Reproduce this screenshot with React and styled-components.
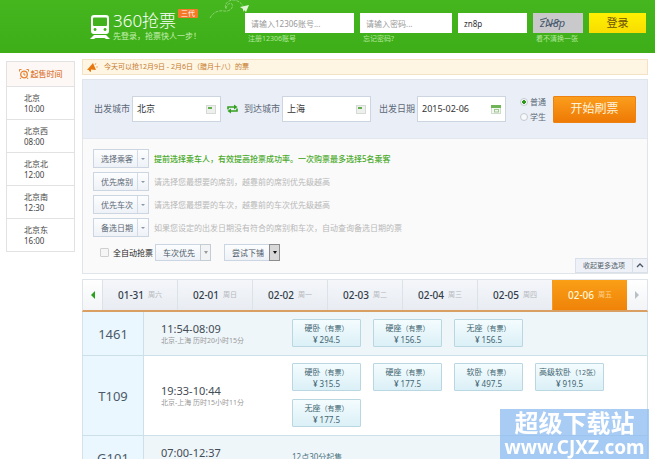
import React, { useState } from "react";
import styled, { createGlobalStyle, css } from "styled-components";

const GlobalStyle = createGlobalStyle`
    * {
        box-sizing: border-box;
    }

    body {
        margin: 0;
        background-color: #fff;
        color: #444;
        font-family: "Noto Sans", "Noto Sans CJK SC", sans-serif;
        font-size: 8px;
        line-height: 12px;
    }

    button,
    input,
    select {
        margin: 0;
        font-family: inherit;
        font-size: inherit;
        line-height: inherit;
        color: inherit;
    }

    button {
        padding: 0;
        cursor: pointer;
    }
`;

const Header = styled.header`
    display: flex;
    min-height: 53px;
    padding: 0 9px 0 90px;
    background: linear-gradient(#46b61f, #3dae18);
`;

const Brand = styled.div`
    position: relative;
    display: flex;
    flex: 0 0 155px;
    align-items: flex-start;
    gap: 3px;
    padding-top: 12px;
    color: #fff;
`;

const Train = styled.svg`
    width: 20px;
    height: 24px;
    margin-top: 3px;
`;

const BrandName = styled.h1`
    margin: 0;
    font-size: 17px;
    font-weight: 300;
    line-height: 18px;
`;

const Slogan = styled.p`
    margin: 0;
    color: #c8f0b4;
    white-space: nowrap;
`;

const Badge = styled.span`
    position: absolute;
    top: 9px;
    left: 88px;
    padding: 0 3px;
    background-color: #f47a2a;
    border-radius: 1px;
    font-size: 7px;
    line-height: 9px;
`;

const Plane = styled.svg`
    position: absolute;
    top: 0;
    left: 118px;
    width: 44px;
    height: 20px;
`;

const Login = styled.form`
    display: grid;
    flex: 1;
    grid-template-columns: 109fr 92fr 69fr 50px 57px;
    gap: 6px;
    align-items: start;
    padding-top: 13px;
`;

const LoginInput = styled.input`
    display: block;
    width: 100%;
    height: 20px;
    padding: 0 6px;
    border: none;
    background-color: #fff;
    color: #333;

    &::placeholder {
        color: #999;
        opacity: 1;
    }
`;

const LoginLink = styled.a`
    display: block;
    padding-left: 3px;
    color: #b5e89f;
    font-size: 7px;
    text-decoration: none;
    white-space: nowrap;
`;

const Captcha = styled.svg`
    display: block;
    width: 50px;
    height: 20px;
    background-color: #c9c9cb;
`;

const LoginButton = styled.button`
    height: 20px;
    border: none;
    background: linear-gradient(#fff000, #f8dd00);
    color: #6d5300;
    font-size: 11px;
`;

const Body = styled.div`
    display: flex;
    align-items: flex-start;
    gap: 7px;
    padding: 6px 7px 0 6px;
`;

const Sidebar = styled.aside`
    flex: 0 0 69px;
    margin-top: 2px;
    border: 1px solid #e2e2e2;
`;

const SidebarTitle = styled.h2`
    display: flex;
    align-items: center;
    justify-content: center;
    gap: 2px;
    height: 24px;
    margin: 0;
    background-color: #fdf8f5;
    color: #dd7c3c;
    font-size: 8px;
    font-weight: 500;
`;

const StationList = styled.ul`
    margin: 0;
    padding: 0;
    list-style: none;
`;

const Station = styled.li`
    height: 33px;
    padding: 5px 0 0 17px;
    border-top: 1px solid #e2e2e2;
    line-height: 11px;
`;

const Main = styled.main`
    flex: 1;
    min-width: 0;
`;

const Notice = styled.p`
    display: flex;
    align-items: center;
    gap: 6px;
    height: 16px;
    margin: 0 0 4px;
    padding-left: 4px;
    border: 1px solid #f3e2c4;
    background-color: #fff5e3;
    color: #c47b2c;
    font-size: 7px;
`;

const Panel = styled.section`
    border: 1px solid #dfe5ea;
    background-color: #fafafa;
`;

const SearchForm = styled.form`
    display: flex;
    align-items: center;
    height: 59px;
    padding: 0 11px;
    border-bottom: 1px solid #e3e8ee;
    background-color: #eaeff7;
    color: #5c6878;
    font-size: 9px;
    white-space: nowrap;
`;

const Field = styled.label`
    display: flex;
    flex: 1;
    align-items: center;
    gap: 2px;
    min-width: 0;
`;

const FieldBox = styled.span`
    display: flex;
    flex: 1;
    align-items: center;
    min-width: 0;
    height: 26px;
    padding: 0 4px;
    border: 1px solid #cdd5e0;
    background-color: #fff;
`;

const FieldInput = styled.input`
    flex: 1;
    width: 100%;
    min-width: 0;
    padding: 0;
    border: none;
    outline: none;
    background: none;
    color: #333;
`;

const SwapButton = styled.button`
    display: flex;
    flex: 0 0 23px;
    justify-content: center;
    border: none;
    background: none;
`;

const DateGap = styled.span`
    flex: 0 0 8px;
`;

const RadioGroup = styled.div`
    display: flex;
    flex-direction: column;
    gap: 3px;
    margin: 0 7px 0 14px;
    font-size: 8px;
`;

const RadioLabel = styled.label`
    display: flex;
    align-items: center;
    gap: 2px;
`;

const Radio = styled.input`
    width: 8px;
    height: 8px;
    margin: 0;
    appearance: none;
    border: 1px solid #c5cad0;
    border-radius: 50%;
    background-color: #f6f8fa;

    &:checked {
        background: radial-gradient(circle, #2d9a1a 0 2px, #f6f8fa 2px);
    }
`;

const SubmitButton = styled.button`
    flex: 0 0 83px;
    height: 27px;
    border: 1px solid #ee8210;
    border-radius: 1px;
    background: linear-gradient(#fb9d1c, #ee7a05);
    color: #fff3dd;
    font-size: 12px;
`;

const Options = styled.div`
    display: flex;
    flex-direction: column;
    gap: 4px;
    padding: 10px 0 0 10px;
`;

const OptionRow = styled.div`
    display: flex;
    align-items: center;
    gap: 5px;
`;

const OptionButton = styled.button`
    display: flex;
    align-items: stretch;
    width: 56px;
    height: 19px;
    border: 1px solid #cbd6e2;
    background: linear-gradient(#fcfdfe, #eef2f7);
    color: #5a6674;
    line-height: 17px;
`;

const OptionText = styled.span`
    flex: 1;
    padding-left: 3px;
`;

const Caret = styled.span`
    display: flex;
    flex: 0 0 11px;
    align-items: center;
    justify-content: center;
    border-left: 1px solid #d3dce6;

    &::after {
        content: "";
        border: 2px solid transparent;
        border-top-color: #8c98a6;
        border-bottom: none;
    }
`;

const Hint = styled.span`
    color: ${(props) => (props.$active ? "#4aaa2c" : "#b8b8b8")};
    font-weight: ${(props) => (props.$active ? 500 : 400)};
`;

const AutoRow = styled.div`
    display: flex;
    align-items: center;
    padding: 3px 0 0 7px;
`;

const CheckLabel = styled.label`
    display: flex;
    align-items: center;
    gap: 4px;
    margin-right: 2px;
    color: #222;
`;

const Checkbox = styled.input`
    width: 9px;
    height: 9px;
    margin: 0;
    appearance: none;
    border: 1px solid #cfcfcf;
    border-radius: 1px;
    background-color: #f6f6f6;

    &:checked {
        background-color: #2d9a1a;
    }
`;

const SelectBox = styled.span`
    position: relative;
    display: block;
    width: 56px;
    height: 17px;
    margin-right: 13px;
`;

const Select = styled.select`
    width: 100%;
    height: 100%;
    padding: 0 0 0 7px;
    appearance: none;
    border: 1px solid #cbd6e2;
    border-radius: 0;
    background: linear-gradient(#fcfdfe, #eef2f7);
    color: #4c5866;
`;

const SelectArrow = styled.span`
    position: absolute;
    top: 0;
    right: 0;
    bottom: 0;
    display: flex;
    align-items: center;
    justify-content: center;
    width: 11px;
    border: 1px solid ${(props) => (props.$dark ? "#8c8c8c" : "#c4ccd4")};
    background: ${(props) => (props.$dark ? "#d8d8d8" : "#f1f3f5")};
    pointer-events: none;

    &::after {
        content: "";
        border: 2px solid transparent;
        border-top: 3px solid ${(props) => (props.$dark ? "#111" : "#999")};
        border-bottom: none;
    }
`;

const CollapseButton = styled.button`
    display: flex;
    align-items: center;
    width: 73px;
    height: 15px;
    margin: -3px -1px 0 auto;
    border: 1px solid #d9e0e8;
    background-color: #eef2f8;
    color: #555f6b;
    font-size: 7px;
`;

const CollapseText = styled.span`
    flex: 1;
`;

const CollapseArrow = styled.svg`
    width: 15px;
    height: 13px;
    border-left: 1px solid #d9e0e8;
`;

const Tabs = styled.nav`
    display: flex;
    height: 33px;
    margin-top: 5px;
    border: 1px solid #dfe4ea;
    border-bottom: 2px solid #d99f63;
    background: linear-gradient(#f4f6fa, #e8ecf2);
`;

const TabArrow = styled.button`
    display: flex;
    flex: 0 0 ${(props) => (props.$next ? "20px" : "19px")};
    align-items: center;
    justify-content: center;
    border: none;
    background: linear-gradient(#fff, #f2f4f7);

    &::after {
        content: "";
        border: 4px solid transparent;
        ${(props) =>
            props.$next
                ? css`
                      border-left-color: #b9bfc6;
                      border-right: none;
                  `
                : css`
                      border-right-color: #2ba01c;
                      border-left: none;
                  `}
    }
`;

const Tab = styled.button`
    display: flex;
    flex: 1;
    align-items: center;
    justify-content: center;
    gap: 4px;
    border: none;
    border-left: 1px solid ${(props) => (props.$active ? "#f09a2a" : "#dde2e8")};
    background: ${(props) => (props.$active ? "linear-gradient(#fa9f16, #ef8309)" : "none")};
    color: ${(props) => (props.$active ? "#fff8d8" : "#333d49")};
    font-size: 10px;
    font-weight: 500;
`;

const Weekday = styled.small`
    color: ${(props) => (props.$active ? "#fdd28c" : "#b4b8bd")};
    font-size: 7px;
    font-weight: 400;
`;

const Table = styled.table`
    width: 100%;
    border: 1px solid #d3e2e8;
    border-top: none;
    border-collapse: separate;
    border-spacing: 0;
    table-layout: fixed;
`;

const Row = styled.tr`
    background-color: ${(props) => (props.$tinted ? "#eef6fa" : "#fff")};
`;

const TrainNo = styled.th`
    width: 61px;
    border-right: 1px solid #cbe0e8;
    border-bottom: 1px solid #cbe0e8;
    background-color: #ebf7fe;
    color: #4b5a68;
    font-size: 13px;
    font-weight: 400;
    line-height: 18px;
`;

const TimeCell = styled.td`
    width: 148px;
    padding: 0 0 0 17px;
    border-bottom: 1px solid #cbe0e8;
`;

const Time = styled.div`
    color: #444c55;
    font-size: 11px;
    line-height: 13px;
`;

const Duration = styled.div`
    color: #999;
    font-size: 7px;
    line-height: 11px;
`;

const SeatCell = styled.td`
    height: 44px;
    padding: 7px 0 8px;
    border-bottom: 1px solid #cbe0e8;
    color: #4d7380;
`;

const Seats = styled.div`
    display: flex;
    flex-wrap: wrap;
    gap: 8px 12px;
`;

const Seat = styled.button`
    width: 69px;
    height: 28px;
    border: 1px solid #b9d6e1;
    border-radius: 1px;
    background: linear-gradient(#f4fcfe, #dbf0f7);
    color: #3f6470;
    line-height: 11px;
    white-space: nowrap;
`;

const Remain = styled.small`
    font-size: 7px;
`;

const Watermark = styled.div`
    position: fixed;
    right: 6px;
    bottom: 0;
    width: 149px;
    height: 50px;
    background-color: rgba(140, 187, 240, 0.75);
    color: #fff;
    font-weight: 700;
    text-align: center;
    white-space: nowrap;
`;

const WatermarkName = styled.div`
    font-size: 24px;
    line-height: 27px;
`;

const WatermarkUrl = styled.div`
    font-size: 19px;
    line-height: 23px;
`;

const stations = [
    ["北京", "10:00"],
    ["北京西", "08:00"],
    ["北京北", "12:00"],
    ["北京南", "12:30"],
    ["北京东", "16:00"],
];

const options = [
    { name: "选择乘客", hint: "提前选择乘车人，有效提高抢票成功率。一次购票最多选择5名乘客", active: true },
    { name: "优先席别", hint: "请选择您最想要的席别，越靠前的席别优先级越高" },
    { name: "优先车次", hint: "请选择您最想要的车次，越靠前的车次优先级越高" },
    { name: "备选日期", hint: "如果您设定的出发日期没有符合的席别和车次，自动查询备选日期的票" },
];

const days = [
    ["01-31", "周六"],
    ["02-01", "周日"],
    ["02-02", "周一"],
    ["02-03", "周二"],
    ["02-04", "周三"],
    ["02-05", "周四"],
    ["02-06", "周五"],
];

const trains = [
    {
        no: "1461",
        time: "11:54-08:09",
        duration: "北京-上海 历时20小时15分",
        seats: [
            ["硬卧", "有票", "294.5"],
            ["硬座", "有票", "156.5"],
            ["无座", "有票", "156.5"],
        ],
    },
    {
        no: "T109",
        time: "19:33-10:44",
        duration: "北京-上海 历时15小时11分",
        seats: [
            ["硬卧", "有票", "315.5"],
            ["硬座", "有票", "177.5"],
            ["软卧", "有票", "497.5"],
            ["高级软卧", "12张", "919.5"],
            ["无座", "有票", "177.5"],
        ],
    },
    {
        no: "G101",
        time: "07:00-12:37",
        duration: "北京-上海 历时5小时37分",
        note: "12点30分起售",
    },
];

const CityIcon = () => (
    <svg width="10" height="9" viewBox="0 0 10 9">
        <rect x="0.5" y="0.5" width="9" height="8" fill="#eef0ee" stroke="#d5dad5" />
        <rect x="2" y="2" width="4" height="2" fill="#62b04d" />
    </svg>
);

const CalendarIcon = () => (
    <svg width="10" height="9" viewBox="0 0 10 9">
        <rect x="0.5" y="0.5" width="9" height="8" fill="#f4f8f2" stroke="#cfdccb" />
        <rect width="10" height="3" fill="#6fb558" />
        <rect x="3.5" y="4.5" width="4" height="2.5" fill="none" stroke="#9cc78e" />
    </svg>
);

const App = () => {
    const [city, setCity] = useState("北京");
    const [target, setTarget] = useState("上海");
    const [date, setDate] = useState("2015-02-06");
    const [activeDay, setActiveDay] = useState("02-06");

    const handleSubmit = (e) => e.preventDefault();

    const swapCities = () => {
        setCity(target);
        setTarget(city);
    };

    return (
        <>
            <GlobalStyle />
            <Header>
                <Brand>
                    <Train viewBox="0 0 20 24">
                        <path
                            fill="#fff"
                            fillRule="evenodd"
                            d="M4 0h12q3 0 3 3v13q0 3-3 3H4q-3 0-3-3V3q0-3 3-3zM4 2.500q-1 0-1 1V10q0 1 1 1h12q1 0 1-1V3.500q0-1-1-1zM5 13a1.500 1.500 0 1 0 .1 0zM15 13a1.500 1.500 0 1 0 .1 0z"
                        />
                        <path fill="#fff" d="M4 20h12l4 4h-4l-1.500-1h-9L4 24H0z" />
                    </Train>
                    <div>
                        <BrandName>360抢票</BrandName>
                        <Slogan>先登录，抢票快人一步！</Slogan>
                    </div>
                    <Badge>三代</Badge>
                    <Plane viewBox="0 0 44 20">
                        <path
                            d="M2 18C5 12 11 10 16 11C21 12 26 8 24 4C22 2 18 5 18 9C16 5 19 0 26 0Q32 1 35 6"
                            fill="none"
                            stroke="#9bd884"
                            strokeWidth="0.8"
                            strokeDasharray="3 1"
                        />
                        <path d="M32 7l9-2-3 7-2-2-1 2v-3z" fill="#dff5d6" />
                    </Plane>
                </Brand>
                <Login onSubmit={handleSubmit}>
                    <div>
                        <LoginInput aria-label="12306账号" placeholder="请输入12306账号..." />
                        <LoginLink href="#register">注册12306账号</LoginLink>
                    </div>
                    <div>
                        <LoginInput type="password" aria-label="密码" placeholder="请输入密码..." />
                        <LoginLink href="#forgot">忘记密码?</LoginLink>
                    </div>
                    <LoginInput aria-label="验证码" defaultValue="zn8p" />
                    <div>
                        <Captcha viewBox="0 0 50 20">
                            <text x="7" y="14" fill="#45566b" fontSize="11" fontStyle="italic">
                                zN8p
                            </text>
                            <path d="M7 7l7-2M13 13l14-5" stroke="#45566b" fill="none" />
                        </Captcha>
                        <LoginLink href="#captcha">看不清换一张</LoginLink>
                    </div>
                    <LoginButton type="submit">登录</LoginButton>
                </Login>
            </Header>

            <Body>
                <Sidebar>
                    <SidebarTitle>
                        <svg width="10" height="10" viewBox="0 0 10 10" fill="none" stroke="#e8822e">
                            <circle cx="5" cy="5.5" r="3.3" strokeWidth="1.3" />
                            <path d="M5 3.5V6h1.5M.5 2.5v-2h2M9.5 2.5v-2h-2M2 8.5L1 10M8 8.5L9 10" />
                        </svg>
                        起售时间
                    </SidebarTitle>
                    <StationList>
                        {stations.map(([name, time]) => (
                            <Station key={name}>
                                <div>{name}</div>
                                <time>{time}</time>
                            </Station>
                        ))}
                    </StationList>
                </Sidebar>

                <Main>
                    <Notice>
                        <svg width="11" height="9" viewBox="0 0 11 9">
                            <path d="M0 7L6 0l3 7-5-.5L4 9 2 8V7z" fill="#e8780c" />
                            <path d="M8 2l1-2M9 4h2" stroke="#f0b06a" />
                        </svg>
                        今天可以抢12月9日 - 2月6日（腊月十八）的票
                    </Notice>

                    <Panel>
                        <SearchForm onSubmit={handleSubmit}>
                            <Field>
                                出发城市
                                <FieldBox>
                                    <FieldInput value={city} onChange={(e) => setCity(e.target.value)} />
                                    <CityIcon />
                                </FieldBox>
                            </Field>
                            <SwapButton type="button" aria-label="交换城市" onClick={swapCities}>
                                <svg width="11" height="10" viewBox="0 0 11 10">
                                    <path d="M1 5.5V3h7M10 4.5V7H3" fill="none" stroke="#35a020" strokeWidth="1.6" />
                                    <path d="M7 .5L10.500 3 7 5.500zM4 4.500L.5 7 4 9.500z" fill="#35a020" />
                                </svg>
                            </SwapButton>
                            <Field>
                                到达城市
                                <FieldBox>
                                    <FieldInput value={target} onChange={(e) => setTarget(e.target.value)} />
                                    <CityIcon />
                                </FieldBox>
                            </Field>
                            <DateGap />
                            <Field>
                                出发日期
                                <FieldBox>
                                    <FieldInput value={date} onChange={(e) => setDate(e.target.value)} />
                                    <CalendarIcon />
                                </FieldBox>
                            </Field>
                            <RadioGroup>
                                <RadioLabel>
                                    <Radio type="radio" name="kind" defaultChecked />
                                    普通
                                </RadioLabel>
                                <RadioLabel>
                                    <Radio type="radio" name="kind" />
                                    学生
                                </RadioLabel>
                            </RadioGroup>
                            <SubmitButton type="submit">开始刷票</SubmitButton>
                        </SearchForm>

                        <Options>
                            {options.map((option) => (
                                <OptionRow key={option.name}>
                                    <OptionButton type="button">
                                        <OptionText>{option.name}</OptionText>
                                        <Caret />
                                    </OptionButton>
                                    <Hint $active={option.active}>{option.hint}</Hint>
                                </OptionRow>
                            ))}
                            <AutoRow>
                                <CheckLabel>
                                    <Checkbox type="checkbox" />
                                    全自动抢票
                                </CheckLabel>
                                <SelectBox>
                                    <Select aria-label="优先方式">
                                        <option>车次优先</option>
                                    </Select>
                                    <SelectArrow />
                                </SelectBox>
                                <SelectBox>
                                    <Select aria-label="铺位">
                                        <option>尝试下铺</option>
                                    </Select>
                                    <SelectArrow $dark />
                                </SelectBox>
                            </AutoRow>
                        </Options>
                        <CollapseButton type="button">
                            <CollapseText>收起更多选项</CollapseText>
                            <CollapseArrow viewBox="0 0 14 13">
                                <path d="M4 8l3-3 3 3" fill="none" stroke="#4a5563" strokeWidth="1.3" />
                            </CollapseArrow>
                        </CollapseButton>
                    </Panel>

                    <Tabs>
                        <TabArrow type="button" aria-label="前一天" />
                        {days.map(([day, weekday]) => (
                            <Tab
                                key={day}
                                type="button"
                                $active={day === activeDay}
                                onClick={() => setActiveDay(day)}
                            >
                                {day}
                                <Weekday $active={day === activeDay}>{weekday}</Weekday>
                            </Tab>
                        ))}
                        <TabArrow type="button" aria-label="后一天" $next />
                    </Tabs>

                    <Table>
                        <tbody>
                            {trains.map((train, index) => (
                                <Row key={train.no} $tinted={index % 2 === 0}>
                                    <TrainNo scope="row">{train.no}</TrainNo>
                                    <TimeCell>
                                        <Time>{train.time}</Time>
                                        <Duration>{train.duration}</Duration>
                                    </TimeCell>
                                    <SeatCell>
                                        {train.note}
                                        {train.seats && (
                                            <Seats>
                                                {train.seats.map(([name, remain, price]) => (
                                                    <Seat key={name} type="button">
                                                        {name}
                                                        <Remain>（{remain}）</Remain>
                                                        <br />¥ {price}
                                                    </Seat>
                                                ))}
                                            </Seats>
                                        )}
                                    </SeatCell>
                                </Row>
                            ))}
                        </tbody>
                    </Table>
                </Main>
            </Body>

            <Watermark>
                <WatermarkName>超级下载站</WatermarkName>
                <WatermarkUrl>www.CJXZ.com</WatermarkUrl>
            </Watermark>
        </>
    );
};

export default App;
